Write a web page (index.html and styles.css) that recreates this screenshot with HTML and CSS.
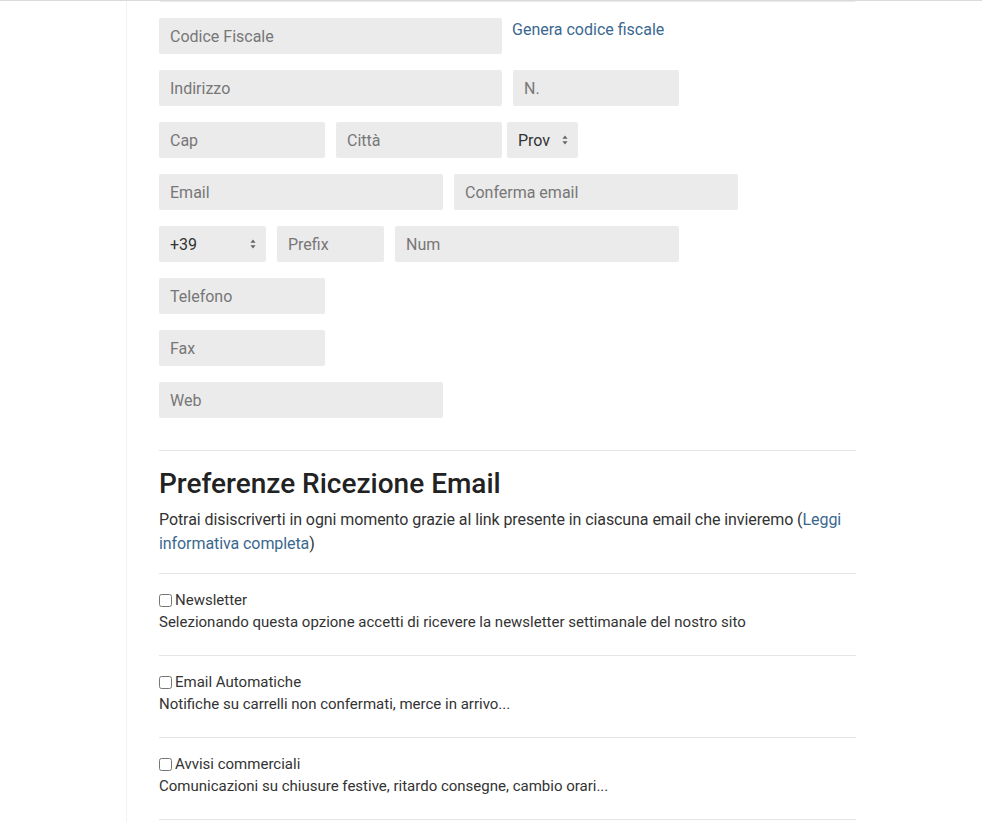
FILE: index.html
```html
<!DOCTYPE html>
<html lang="it">
<head>
    <meta charset="UTF-8">
    <meta name="viewport" content="width=device-width, initial-scale=1.0">
    <title>Registrazione</title>
    <link rel="stylesheet" href="styles.css">
</head>
<body>
    <div class="page">
        <form class="registration">
            <div class="row first">
                <input class="field span-12" type="text" placeholder="Ragione Sociale">
            </div>

            <div class="row">
                <input class="field span-6" type="text" placeholder="Codice Fiscale">
                <a class="side-link span-6" href="#">Genera codice fiscale</a>
            </div>

            <div class="row">
                <input class="field span-6" type="text" placeholder="Indirizzo">
                <input class="field span-3" type="text" placeholder="N.">
            </div>

            <div class="row">
                <input class="field span-3" type="text" placeholder="Cap">
                <div class="city span-6">
                    <input class="field city-input" type="text" placeholder="Città">
                    <div class="select-wrap">
                        <select class="field select prov">
                            <option>Prov</option>
                        </select>
                        <svg class="arrows" width="6" height="10" viewBox="0 0 6 10"><path d="M3 0.5 L5.6 3.8 H0.4 Z M3 9.5 L5.6 6.2 H0.4 Z" fill="#666"/></svg>
                    </div>
                </div>
            </div>

            <div class="row">
                <input class="field span-5" type="email" placeholder="Email">
                <input class="field span-5" type="email" placeholder="Conferma email">
            </div>

            <div class="row">
                <div class="select-wrap span-2">
                    <select class="field select">
                        <option>+39</option>
                    </select>
                    <svg class="arrows" width="6" height="10" viewBox="0 0 6 10"><path d="M3 0.5 L5.6 3.8 H0.4 Z M3 9.5 L5.6 6.2 H0.4 Z" fill="#666"/></svg>
                </div>
                <input class="field span-2" type="text" placeholder="Prefix">
                <input class="field span-5" type="text" placeholder="Num">
            </div>

            <div class="row">
                <input class="field span-3" type="text" placeholder="Telefono">
            </div>

            <div class="row">
                <input class="field span-3" type="text" placeholder="Fax">
            </div>

            <div class="row">
                <input class="field span-5" type="text" placeholder="Web">
            </div>
        </form>

        <section class="prefs">
            <h2>Preferenze Ricezione Email</h2>
            <p class="intro">Potrai disiscriverti in ogni momento grazie al link presente in ciascuna email che invieremo (<a href="#">Leggi informativa completa</a>)</p>

            <div class="pref">
                <label><input type="checkbox"> Newsletter</label>
                <div class="desc">Selezionando questa opzione accetti di ricevere la newsletter settimanale del nostro sito</div>
            </div>
            <div class="pref">
                <label><input type="checkbox"> Email Automatiche</label>
                <div class="desc">Notifiche su carrelli non confermati, merce in arrivo...</div>
            </div>
            <div class="pref">
                <label><input type="checkbox"> Avvisi commerciali</label>
                <div class="desc">Comunicazioni su chiusure festive, ritardo consegne, cambio orari...</div>
            </div>
            <div class="pref last"></div>
        </section>
    </div>
</body>
</html>
```

FILE: styles.css
```css
html, body {
    overflow: hidden;
}
body {
    margin: 0;
    font-family: Roboto, 'Liberation Sans', sans-serif;
    color: #333;
    background-color: #fff;
    border-top: 1px solid #dadada;
}
.page {
    margin-left: 126px;
    border-left: 1px solid #f2f2f2;
    padding-left: 32px;
    min-height: 900px;
}
.registration {
    width: 697px;
}
.row {
    display: grid;
    grid-template-columns: repeat(12, 48px);
    column-gap: 11px;
    margin-bottom: 16px;
}
.row.first {
    margin-top: -35px;
}
.span-2 { grid-column: span 2; }
.span-3 { grid-column: span 3; }
.span-5 { grid-column: span 5; }
.span-6 { grid-column: span 6; }
.span-12 { grid-column: span 12; }

.field {
    box-sizing: border-box;
    height: 36px;
    padding: 0 11px;
    border: none;
    border-radius: 2px;
    background-color: #ebebeb;
    font-family: inherit;
    font-size: 16px;
    color: #333;
    outline: none;
    min-width: 0;
}
.field::placeholder {
    color: #777;
}
.side-link {
    margin-left: -1px;
    padding-top: 1px;
    color: #3a6890;
    text-decoration: none;
    font-size: 16px;
    line-height: 22px;
}
.city {
    display: flex;
    gap: 5px;
}
.city-input {
    width: 166px;
}
.select-wrap {
    position: relative;
}
.select {
    appearance: none;
    width: 100%;
    padding-right: 24px;
}
.prov {
    width: 71px;
}
.arrows {
    position: absolute;
    right: 10px;
    top: 13px;
    pointer-events: none;
}
.prefs {
    width: 697px;
    margin-top: 32px;
    border-top: 1px solid #e5e5e5;
}
.prefs h2 {
    margin: 16px 0 7px;
    font-size: 28px;
    font-weight: 500;
    line-height: 34px;
    color: #222;
}
.intro {
    margin: 0 0 17px;
    font-size: 16px;
    line-height: 24px;
    letter-spacing: -0.08px;
}
.intro a {
    color: #3a6890;
    text-decoration: none;
}
.pref {
    border-top: 1px solid #e5e5e5;
    padding: 15px 0 22px;
    font-size: 15px;
    line-height: 22px;
}
.pref label {
    display: flex;
    align-items: center;
}
.pref input[type="checkbox"] {
    margin: 0 3px 0 0;
    width: 13px;
    height: 13px;
}
```
